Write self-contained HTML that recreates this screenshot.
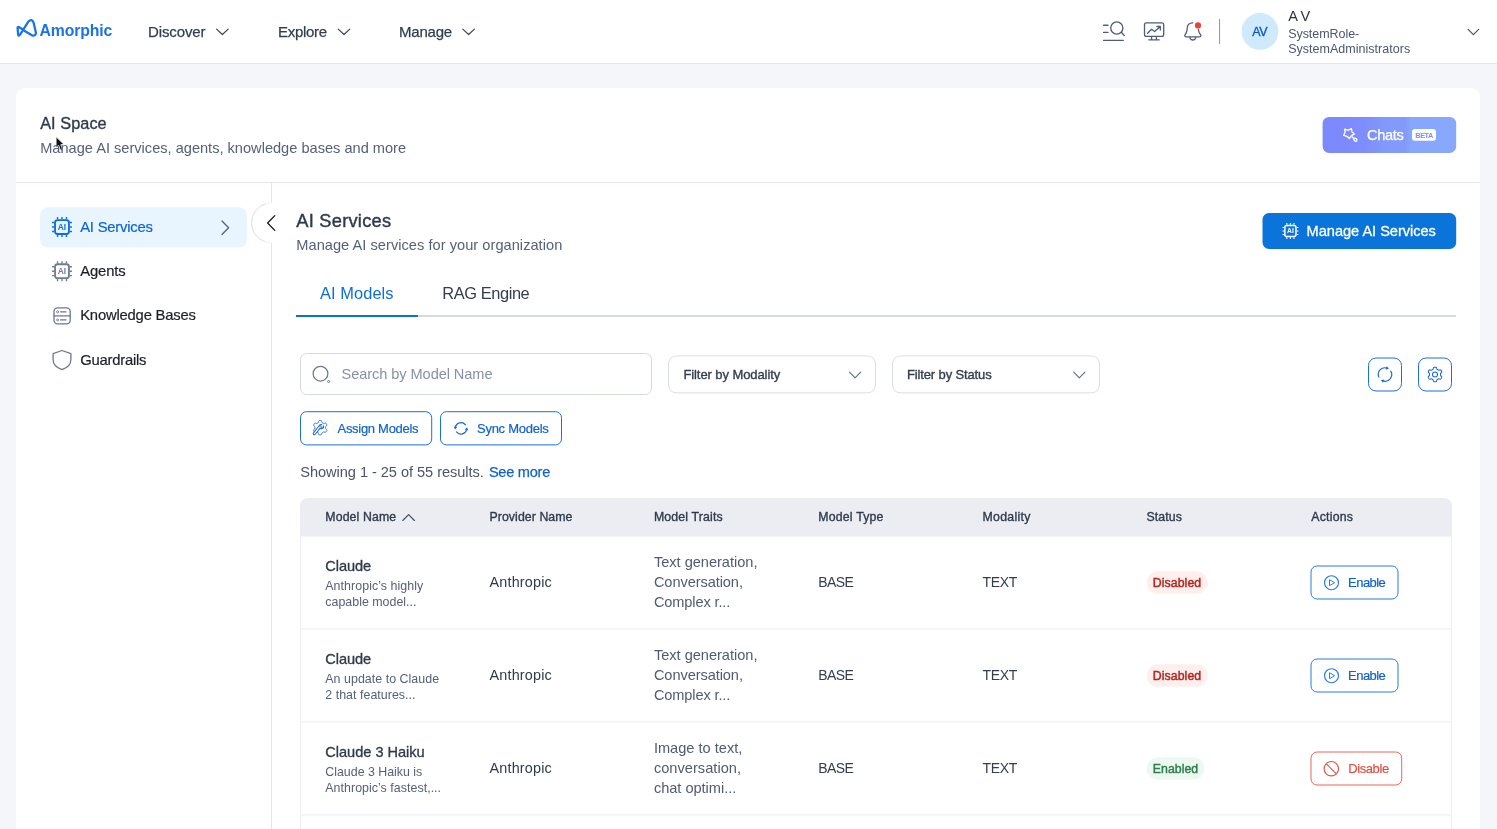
<!DOCTYPE html>
<html lang="en">
<head>
<meta charset="utf-8">
<title>Amorphic - AI Space</title>
<style>
*{box-sizing:border-box;margin:0;padding:0}
html,body{width:1497px;height:829px;overflow:hidden;background:#f4f6fa;font-family:"Liberation Sans",Arial,sans-serif;color:#2f3747}
body{position:relative}
header{position:absolute;left:0;top:0;width:1497px;height:64px;background:#fff;border-bottom:1px solid #e3e6ef}
main{position:absolute;left:16px;top:88px;width:1464px;height:760px;background:#fff;border-radius:9px 9px 0 0}
svg.ov{position:absolute;left:0;top:0;width:1497px;height:829px;overflow:hidden}
.t{position:absolute;white-space:nowrap;line-height:1;display:block}
#texts,svg.ov{will-change:transform}
</style>
</head>
<body>
<header></header>
<main></main>
<svg class="ov" width="1497" height="829" viewBox="0 0 1497 829">
<path d="M24.6 31.2 L32.2 35.6 Q35.9 37.2 36.4 33 L33.9 22.3 Q32.2 17.6 28.4 21.2 L19.7 35 Q17.9 37.4 17.6 34.4 L17.1 28 Q17 26.3 18.8 27.2 L22.6 29.6" fill="none" stroke="#1a73e8" stroke-width="2.4" stroke-linecap="round" stroke-linejoin="round" transform="translate(27 27.9) scale(0.95) translate(-27 -27.9)"/>
<path d="M216.6 29.1 L222.4 34.5 L228.2 29.1" fill="none" stroke="#3f4a5f" stroke-width="1.25" stroke-linecap="round" stroke-linejoin="round"/>
<path d="M338.2 29.1 L344.0 34.5 L349.8 29.1" fill="none" stroke="#3f4a5f" stroke-width="1.25" stroke-linecap="round" stroke-linejoin="round"/>
<path d="M462.8 29.1 L468.6 34.5 L474.4 29.1" fill="none" stroke="#3f4a5f" stroke-width="1.25" stroke-linecap="round" stroke-linejoin="round"/>
<g fill="none" stroke="#515c75" stroke-width="1.35" stroke-linecap="round"><path d="M1103.6 25.2H1108 M1103.6 32.4H1108 M1103.6 40.4H1123.3"/><circle cx="1116.8" cy="28" r="6.1"/><path d="M1121.5 32.6L1124.3 35.4"/></g>
<g fill="none" stroke="#515c75" stroke-width="1.3" stroke-linecap="round" stroke-linejoin="round"><rect x="1144.5" y="22.8" width="19.2" height="13.6" rx="2"/><path d="M1151.6 36.6V39.6 M1156.4 36.6V39.6 M1148.8 39.8H1159.2"/><path d="M1147.6 33.2L1151.5 29.3L1154.6 31.5L1160 26.8 M1156.9 26.5H1160.3V30"/></g>
<g fill="none" stroke="#515c75" stroke-width="1.3" stroke-linecap="round" stroke-linejoin="round"><path d="M1192.8 22.8C1189 22.8 1187.2 25.6 1187.2 28.8C1187.2 32.2 1185.8 33.6 1185 34.8C1184.4 35.8 1185 36.9 1186.2 36.9H1199.4C1200.6 36.9 1201.2 35.8 1200.6 34.8C1199.8 33.6 1198.6 32.2 1198.4 29.5"/><path d="M1189.8 37.6C1190.3 39.2 1191.4 40 1192.8 40C1194.2 40 1195.3 39.2 1195.8 37.6"/></g>
<circle cx="1198" cy="25.4" r="3.1" fill="#e5453a"/>
<path d="M1219.6 19V44" stroke="#8b95ab" stroke-width="1"/>
<circle cx="1260" cy="31.4" r="18.4" fill="#cfe9fd"/>
<path d="M1468.1 29.4 L1473.4 34.6 L1478.7 29.4" fill="none" stroke="#4a5670" stroke-width="1.25" stroke-linecap="round" stroke-linejoin="round"/>
<path d="M16 182.5H1480" stroke="#e3e6ef" stroke-width="1"/>
<path d="M271.5 183V829" stroke="#e3e6ef" stroke-width="1"/>
<linearGradient id="cg" x1="0" x2="1" y1="0" y2="0"><stop offset="0" stop-color="#7c88fd"/><stop offset="0.3" stop-color="#7e8cfc"/><stop offset="0.45" stop-color="#8099fb"/><stop offset="0.62" stop-color="#829bfb"/><stop offset="0.66" stop-color="#87a6fd"/><stop offset="1" stop-color="#88a8fd"/></linearGradient>
<rect x="1322.6" y="116.9" width="133.6" height="36" rx="6.5" fill="url(#cg)"/>
<g fill="none" stroke="#fff" stroke-width="1.3" stroke-linejoin="round" stroke-linecap="round"><path d="M1344.7 129.1L1348 130.3L1351.4 128.6L1352 131.9L1354.4 133.9L1351.3 135.9L1349.3 138.5L1346.9 136.3L1343.6 135.4L1345.1 132.3Z"/><path d="M1352.2 137L1354 138.5"/><ellipse cx="1355.4" cy="139.8" rx="1.7" ry="1.3" transform="rotate(40 1355.4 139.8)"/></g>
<rect x="1412" y="129" width="24" height="11.8" rx="3" fill="#fff"/>
<rect x="40" y="207.3" width="207" height="40.2" rx="8" fill="#e8f5fe"/>
<g fill="none" stroke="#0d6fd8" stroke-linecap="butt">
<rect x="55.05" y="220.05" width="13.90" height="13.90" rx="2.50" stroke-width="1.85"/>
<path d="M57.55 217.05V219.30 M57.55 234.70V236.95 M52.05 222.55H54.30 M69.70 222.55H71.95 M62.00 217.05V219.30 M62.00 234.70V236.95 M52.05 227.00H54.30 M69.70 227.00H71.95 M66.45 217.05V219.30 M66.45 234.70V236.95 M52.05 231.45H54.30 M69.70 231.45H71.95 " stroke-width="1.40"/>
</g>
<text x="62.00" y="230.01" text-anchor="middle" font-family="Liberation Sans, Arial, sans-serif" font-weight="bold" font-size="8.40" fill="#0d6fd8">AI</text>
<g fill="none" stroke="#707c96" stroke-linecap="butt">
<rect x="55.05" y="264.25" width="13.90" height="13.90" rx="2.50" stroke-width="1.85"/>
<path d="M57.55 261.25V263.50 M57.55 278.90V281.15 M52.05 266.75H54.30 M69.70 266.75H71.95 M62.00 261.25V263.50 M62.00 278.90V281.15 M52.05 271.20H54.30 M69.70 271.20H71.95 M66.45 261.25V263.50 M66.45 278.90V281.15 M52.05 275.65H54.30 M69.70 275.65H71.95 " stroke-width="1.40"/>
</g>
<text x="62.00" y="274.21" text-anchor="middle" font-family="Liberation Sans, Arial, sans-serif" font-weight="bold" font-size="8.40" fill="#707c96">AI</text>
<path d="M222.0 220.9 L228.6 227.7 L222.0 234.5" fill="none" stroke="#5a6782" stroke-width="1.4" stroke-linecap="round" stroke-linejoin="round"/>
<g fill="none" stroke="#6b7894" stroke-width="1.3" stroke-linecap="round"><rect x="54" y="307.8" width="16.2" height="16" rx="3.6"/><path d="M54 315.8H70.2 M60.6 311.8H66 M60.6 319.9H66"/></g><circle cx="57.6" cy="311.8" r="1" fill="none" stroke="#6b7894" stroke-width="0.9"/><circle cx="57.6" cy="319.9" r="1" fill="none" stroke="#6b7894" stroke-width="0.9"/>
<path d="M62 350.5L70.9 353.7V359.5C70.9 364.4 67.2 367.9 62 369.7C56.8 367.9 53.1 364.4 53.1 359.5V353.7Z" fill="none" stroke="#6b7894" stroke-width="1.3" stroke-linejoin="round"/>
<path d="M271.5 202.8A20 20 0 0 0 271.5 242.8Z" fill="#fff" stroke="none"/>
<path d="M269.76 202.88A20 20 0 0 0 269.76 242.72" fill="none" stroke="#eef0f5" stroke-width="1"/>
<path d="M265.32 203.78A20 20 0 0 0 265.32 241.82" fill="none" stroke="#dfe2ec" stroke-width="1"/>
<rect x="270" y="203.4" width="4" height="38.8" fill="#fff"/>
<path d="M274.8 215.6 L267.6 223.0 L274.8 230.4" fill="none" stroke="#14171d" stroke-width="1.3" stroke-linecap="round" stroke-linejoin="round"/>
<rect x="1262.5" y="213" width="193.7" height="35.9" rx="6.5" fill="#0b74da"/>
<g fill="none" stroke="#ffffff" stroke-linecap="butt">
<rect x="1284.84" y="225.44" width="11.12" height="11.12" rx="2.00" stroke-width="1.48"/>
<path d="M1286.84 223.04V224.84 M1286.84 237.16V238.96 M1282.44 227.44H1284.24 M1296.56 227.44H1298.36 M1290.40 223.04V224.84 M1290.40 237.16V238.96 M1282.44 231.00H1284.24 M1296.56 231.00H1298.36 M1293.96 223.04V224.84 M1293.96 237.16V238.96 M1282.44 234.56H1284.24 M1296.56 234.56H1298.36 " stroke-width="1.12"/>
</g>
<text x="1290.40" y="233.41" text-anchor="middle" font-family="Liberation Sans, Arial, sans-serif" font-weight="bold" font-size="6.72" fill="#ffffff">AI</text>
<path d="M296 316H1456" stroke="#d5d9e3" stroke-width="2"/><path d="M296 316H418" stroke="#0d6fd8" stroke-width="2"/>
<rect x="300.5" y="353.5" width="351" height="41" rx="6" fill="#fff" stroke="#d5d9e4"/>
<circle cx="320.5" cy="373.7" r="7.4" fill="none" stroke="#6c7790" stroke-width="1.2"/><circle cx="328.6" cy="381.5" r="1" fill="none" stroke="#626e88" stroke-width="0.9"/>
<rect x="668.5" y="355.9" width="207" height="37" rx="8" fill="#fff" stroke="#d9dde8"/>
<rect x="892.5" y="355.9" width="207" height="37" rx="8" fill="#fff" stroke="#d9dde8"/>
<path d="M849.5 372.2 L855.1 377.8 L860.7 372.2" fill="none" stroke="#66718b" stroke-width="1.2" stroke-linecap="round" stroke-linejoin="round"/>
<path d="M1073.7 372.2 L1079.3 377.8 L1084.9 372.2" fill="none" stroke="#66718b" stroke-width="1.2" stroke-linecap="round" stroke-linejoin="round"/>
<rect x="1368.5" y="358" width="33" height="33" rx="7.5" fill="#fff" stroke="#1a6fdc"/>
<rect x="1418.5" y="358" width="33" height="33" rx="7.5" fill="#fff" stroke="#1a6fdc"/>
<path d="M1378.83 377.12 A6.7 6.7 0 0 1 1387.07 368.13" fill="none" stroke="#1a66d2" stroke-width="1.15" stroke-linecap="round"/>
<path d="M1386.82 366.47 L1388.64 368.64 L1385.89 369.32 Z" fill="#1a66d2" stroke="#1a66d2" stroke-width="0.3" stroke-linejoin="round"/>
<path d="M1390.80 371.15 A6.7 6.7 0 0 1 1382.71 380.80" fill="none" stroke="#1a66d2" stroke-width="1.15" stroke-linecap="round"/>
<path d="M1382.90 382.46 L1381.16 380.23 L1383.93 379.64 Z" fill="#1a66d2" stroke="#1a66d2" stroke-width="0.3" stroke-linejoin="round"/>
<path d="M1440.50 374.50 L1440.50 374.69 L1440.50 374.88 L1440.50 375.08 L1440.52 375.28 L1440.58 375.48 L1440.73 375.72 L1441.01 376.00 L1441.35 376.32 L1441.61 376.65 L1441.71 376.94 L1441.70 377.21 L1441.64 377.46 L1441.55 377.70 L1441.44 377.93 L1441.32 378.15 L1441.19 378.37 L1441.04 378.58 L1440.88 378.77 L1440.70 378.95 L1440.47 379.09 L1440.16 379.15 L1439.75 379.09 L1439.30 378.95 L1438.92 378.85 L1438.64 378.84 L1438.43 378.89 L1438.25 378.97 L1438.08 379.07 L1437.92 379.17 L1437.75 379.26 L1437.58 379.36 L1437.42 379.45 L1437.25 379.55 L1437.09 379.66 L1436.94 379.82 L1436.81 380.07 L1436.71 380.45 L1436.60 380.91 L1436.44 381.29 L1436.24 381.53 L1436.01 381.66 L1435.76 381.73 L1435.51 381.77 L1435.25 381.79 L1435.00 381.80 L1434.75 381.79 L1434.49 381.77 L1434.24 381.73 L1433.99 381.66 L1433.76 381.53 L1433.56 381.29 L1433.40 380.91 L1433.29 380.45 L1433.19 380.07 L1433.06 379.82 L1432.91 379.66 L1432.75 379.55 L1432.58 379.45 L1432.42 379.36 L1432.25 379.26 L1432.08 379.17 L1431.92 379.07 L1431.75 378.97 L1431.57 378.89 L1431.36 378.84 L1431.08 378.85 L1430.70 378.95 L1430.25 379.09 L1429.84 379.15 L1429.53 379.09 L1429.30 378.95 L1429.12 378.77 L1428.96 378.58 L1428.81 378.37 L1428.68 378.15 L1428.56 377.93 L1428.45 377.70 L1428.36 377.46 L1428.30 377.21 L1428.29 376.94 L1428.39 376.65 L1428.65 376.32 L1428.99 376.00 L1429.27 375.72 L1429.42 375.48 L1429.48 375.28 L1429.50 375.08 L1429.50 374.88 L1429.50 374.69 L1429.50 374.50 L1429.50 374.31 L1429.50 374.12 L1429.50 373.92 L1429.48 373.72 L1429.42 373.52 L1429.27 373.28 L1428.99 373.00 L1428.65 372.68 L1428.39 372.35 L1428.29 372.06 L1428.30 371.79 L1428.36 371.54 L1428.45 371.30 L1428.56 371.07 L1428.68 370.85 L1428.81 370.63 L1428.96 370.42 L1429.12 370.23 L1429.30 370.05 L1429.53 369.91 L1429.84 369.85 L1430.25 369.91 L1430.70 370.05 L1431.08 370.15 L1431.36 370.16 L1431.57 370.11 L1431.75 370.03 L1431.92 369.93 L1432.08 369.83 L1432.25 369.74 L1432.42 369.64 L1432.58 369.55 L1432.75 369.45 L1432.91 369.34 L1433.06 369.18 L1433.19 368.93 L1433.29 368.55 L1433.40 368.09 L1433.56 367.71 L1433.76 367.47 L1433.99 367.34 L1434.24 367.27 L1434.49 367.23 L1434.75 367.21 L1435.00 367.20 L1435.25 367.21 L1435.51 367.23 L1435.76 367.27 L1436.01 367.34 L1436.24 367.47 L1436.44 367.71 L1436.60 368.09 L1436.71 368.55 L1436.81 368.93 L1436.94 369.18 L1437.09 369.34 L1437.25 369.45 L1437.42 369.55 L1437.58 369.64 L1437.75 369.74 L1437.92 369.83 L1438.08 369.93 L1438.25 370.03 L1438.43 370.11 L1438.64 370.16 L1438.92 370.15 L1439.30 370.05 L1439.75 369.91 L1440.16 369.85 L1440.47 369.91 L1440.70 370.05 L1440.88 370.23 L1441.04 370.42 L1441.19 370.63 L1441.32 370.85 L1441.44 371.07 L1441.55 371.30 L1441.64 371.54 L1441.70 371.79 L1441.71 372.06 L1441.61 372.35 L1441.35 372.68 L1441.01 373.00 L1440.73 373.28 L1440.58 373.52 L1440.52 373.72 L1440.50 373.92 L1440.50 374.12 L1440.50 374.31 Z" fill="none" stroke="#1a66d2" stroke-width="1.05" stroke-linejoin="round"/><circle cx="1435" cy="374.5" r="2.5" fill="none" stroke="#1a66d2" stroke-width="1.05"/>
<rect x="300.5" y="411.7" width="131.2" height="33.2" rx="6" fill="#fff" stroke="#1a6fdc"/>
<rect x="440.5" y="411.7" width="121" height="33.2" rx="6" fill="#fff" stroke="#1a6fdc"/>
<path d="M325.50 427.70 L325.50 427.89 L325.50 428.07 L325.50 428.26 L325.52 428.45 L325.59 428.65 L325.75 428.88 L326.05 429.16 L326.42 429.48 L326.69 429.81 L326.81 430.10 L326.81 430.37 L326.75 430.62 L326.66 430.85 L326.56 431.08 L326.44 431.30 L326.30 431.51 L326.16 431.72 L326.00 431.91 L325.82 432.09 L325.58 432.22 L325.27 432.27 L324.85 432.19 L324.39 432.04 L324.00 431.92 L323.72 431.89 L323.51 431.93 L323.33 432.01 L323.17 432.10 L323.01 432.20 L322.85 432.29 L322.69 432.38 L322.53 432.47 L322.37 432.57 L322.21 432.68 L322.07 432.84 L321.95 433.10 L321.86 433.50 L321.77 433.98 L321.62 434.38 L321.42 434.62 L321.19 434.76 L320.95 434.83 L320.70 434.87 L320.45 434.89 L320.20 434.90 L319.95 434.89 L319.70 434.87 L319.45 434.83 L319.21 434.76 L318.98 434.62 L318.78 434.38 L318.63 433.98 L318.54 433.50 L318.45 433.10 L318.33 432.84 L318.19 432.68 L318.03 432.57 L317.87 432.47 L317.71 432.38 L317.55 432.29 L317.39 432.20 L317.23 432.10 L317.07 432.01 L316.89 431.93 L316.68 431.89 L316.40 431.92 L316.01 432.04 L315.55 432.19 L315.13 432.27 L314.82 432.22 L314.58 432.09 L314.40 431.91 L314.24 431.72 L314.10 431.51 L313.96 431.30 L313.84 431.08 L313.74 430.85 L313.65 430.62 L313.59 430.37 L313.59 430.10 L313.71 429.81 L313.98 429.48 L314.35 429.16 L314.65 428.88 L314.81 428.65 L314.88 428.45 L314.90 428.26 L314.90 428.07 L314.90 427.89 L314.90 427.70 L314.90 427.51 L314.90 427.33 L314.90 427.14 L314.88 426.95 L314.81 426.75 L314.65 426.52 L314.35 426.24 L313.98 425.92 L313.71 425.59 L313.59 425.30 L313.59 425.03 L313.65 424.78 L313.74 424.55 L313.84 424.32 L313.96 424.10 L314.10 423.89 L314.24 423.68 L314.40 423.49 L314.58 423.31 L314.82 423.18 L315.13 423.13 L315.55 423.21 L316.01 423.36 L316.40 423.48 L316.68 423.51 L316.89 423.47 L317.07 423.39 L317.23 423.30 L317.39 423.20 L317.55 423.11 L317.71 423.02 L317.87 422.93 L318.03 422.83 L318.19 422.72 L318.33 422.56 L318.45 422.30 L318.54 421.90 L318.63 421.42 L318.78 421.02 L318.98 420.78 L319.21 420.64 L319.45 420.57 L319.70 420.53 L319.95 420.51 L320.20 420.50 L320.45 420.51 L320.70 420.53 L320.95 420.57 L321.19 420.64 L321.42 420.78 L321.62 421.02 L321.77 421.42 L321.86 421.90 L321.95 422.30 L322.07 422.56 L322.21 422.72 L322.37 422.83 L322.53 422.93 L322.69 423.02 L322.85 423.11 L323.01 423.20 L323.17 423.30 L323.33 423.39 L323.51 423.47 L323.72 423.51 L324.00 423.48 L324.39 423.36 L324.85 423.21 L325.27 423.13 L325.58 423.18 L325.82 423.31 L326.00 423.49 L326.16 423.68 L326.30 423.89 L326.44 424.10 L326.56 424.32 L326.66 424.55 L326.75 424.78 L326.81 425.03 L326.81 425.30 L326.69 425.59 L326.42 425.92 L326.05 426.24 L325.75 426.52 L325.59 426.75 L325.52 426.95 L325.50 427.14 L325.50 427.33 L325.50 427.51 Z" fill="none" stroke="#1a66d2" stroke-width="0.95" stroke-linejoin="round"/>
<path d="M314.4 433.6L319.4 427.2" stroke="#1a66d2" stroke-width="3.3" stroke-linecap="round"/><circle cx="321.4" cy="426.6" r="2.7" fill="#1a66d2"/><path d="M314.4 433.6L319.4 427.2" stroke="#fff" stroke-width="1.3" stroke-linecap="round"/><circle cx="321.4" cy="426.6" r="1.6" fill="#fff"/><path d="M321.4 426.6L323.6 424.2" stroke="#fff" stroke-width="1.5"/><path d="M320.9 425.2V427.2H322.8" fill="none" stroke="#1a66d2" stroke-width="0.9"/>
<path d="M465.49 424.89 A5.7 5.7 0 0 0 455.36 427.61" fill="none" stroke="#1a66d2" stroke-width="1.2" stroke-linecap="round"/>
<path d="M453.97 426.66 L455.13 429.24 L456.95 427.07 Z" fill="#1a66d2" stroke="#1a66d2" stroke-width="0.3" stroke-linejoin="round"/>
<path d="M456.51 431.91 A5.7 5.7 0 0 0 466.64 429.19" fill="none" stroke="#1a66d2" stroke-width="1.2" stroke-linecap="round"/>
<path d="M468.03 430.14 L466.87 427.56 L465.05 429.73 Z" fill="#1a66d2" stroke="#1a66d2" stroke-width="0.3" stroke-linejoin="round"/>
<path d="M300 536.4V506A8 8 0 0 1 308 498H1444A8 8 0 0 1 1452 506V536.4Z" fill="#ebedf2"/>
<path d="M300.5 536.4V829 M1451.5 536.4V829" stroke="#eceef3" stroke-width="1"/>
<path d="M300 628.9H1452 M300 721.9H1452 M300 814.9H1452" stroke="#eef0f4" stroke-width="1.4"/>
<path d="M402.8 520.5 L408.6 514.7 L414.4 520.5" fill="none" stroke="#3f4a5f" stroke-width="1.15" stroke-linecap="round" stroke-linejoin="round"/>
<path d="M56 136.6V147.9L58.6 145.5L60.6 150.6L62.8 149.7L60.8 144.8L64.2 144.6Z" fill="#111" stroke="#fff" stroke-width="1" stroke-linejoin="round"/>
<rect x="1146.8" y="571.3" width="60.4" height="22.4" rx="11.2" fill="#fdefee"/>
<rect x="1311" y="566.0" width="87" height="33" rx="6" fill="#fff" stroke="#2b7de0" stroke-width="1"/>
<circle cx="1331.5" cy="582.7" r="7" fill="none" stroke="#2b7de0" stroke-width="1.15"/>
<path d="M1329.5 579.7 L1334.6 582.7 L1329.5 585.7 Z" fill="none" stroke="#2b7de0" stroke-width="1" stroke-linejoin="round"/>
<rect x="1146.8" y="664.3" width="60.4" height="22.4" rx="11.2" fill="#fdefee"/>
<rect x="1311" y="659.0" width="87" height="33" rx="6" fill="#fff" stroke="#2b7de0" stroke-width="1"/>
<circle cx="1331.5" cy="675.7" r="7" fill="none" stroke="#2b7de0" stroke-width="1.15"/>
<path d="M1329.5 672.7 L1334.6 675.7 L1329.5 678.7 Z" fill="none" stroke="#2b7de0" stroke-width="1" stroke-linejoin="round"/>
<rect x="1146.8" y="757.3" width="57.5" height="22.4" rx="11.2" fill="#edf8f1"/>
<rect x="1311" y="752.0" width="90.7" height="33" rx="6" fill="#fff" stroke="#e9675c" stroke-width="1"/>
<circle cx="1331.3" cy="768.7" r="7.2" fill="none" stroke="#e25347" stroke-width="1.15"/>
<path d="M1326.2 763.6 L1336.4 773.8" fill="none" stroke="#e25347" stroke-width="1.1"/>
</svg>
<div id="texts">
<span class="t" style="left:39.6px;top:22px;line-height:17px;font-size:15.8px;color:#1a73e8;font-weight:bold;letter-spacing:-0.142px;">Amorphic</span>
<span class="t" style="left:148.0px;top:23px;line-height:17px;font-size:15px;color:#333d4f;letter-spacing:-0.120px;-webkit-text-stroke:0.25px #333d4f;">Discover</span>
<span class="t" style="left:278.0px;top:23px;line-height:17px;font-size:15px;color:#333d4f;letter-spacing:-0.308px;-webkit-text-stroke:0.25px #333d4f;">Explore</span>
<span class="t" style="left:399.0px;top:23px;line-height:17px;font-size:15px;color:#333d4f;letter-spacing:-0.220px;-webkit-text-stroke:0.25px #333d4f;">Manage</span>
<span class="t" style="left:1252.2px;top:25px;line-height:14px;font-size:12.5px;color:#0b57c9;letter-spacing:-0.225px;-webkit-text-stroke:0.3px #0b57c9;">AV</span>
<span class="t" style="left:1288.2px;top:8px;line-height:16px;font-size:14.5px;color:#2a3140;letter-spacing:-0.259px;">A V</span>
<span class="t" style="left:1288.2px;top:27px;line-height:14px;font-size:12.5px;color:#4b5670;letter-spacing:-0.050px;">SystemRole-</span>
<span class="t" style="left:1288.2px;top:42px;line-height:14px;font-size:12.5px;color:#4b5670;letter-spacing:0.022px;">SystemAdministrators</span>
<span class="t" style="left:40.2px;top:114px;line-height:18px;font-size:16.3px;color:#2f3a4c;letter-spacing:0.053px;-webkit-text-stroke:0.35px #2f3a4c;">AI Space</span>
<span class="t" style="left:40.2px;top:140px;line-height:16px;font-size:14.6px;color:#556079;">Manage AI services, agents, knowledge bases and more</span>
<span class="t" style="left:1367.0px;top:127px;line-height:16px;font-size:14.6px;color:#ffffff;letter-spacing:-0.325px;-webkit-text-stroke:0.25px #ffffff;">Chats</span>
<span class="t" style="left:1415.3px;top:131px;line-height:9px;font-size:7.4px;color:#7f8ffb;font-weight:bold;letter-spacing:-0.495px;">BETA</span>
<span class="t" style="left:80.2px;top:219px;line-height:16px;font-size:14.8px;color:#0b64d0;letter-spacing:-0.204px;-webkit-text-stroke:0.2px #0b64d0;">AI Services</span>
<span class="t" style="left:80.2px;top:263px;line-height:16px;font-size:14.8px;color:#1b1f27;letter-spacing:-0.130px;-webkit-text-stroke:0.2px #1b1f27;">Agents</span>
<span class="t" style="left:80.2px;top:307px;line-height:16px;font-size:14.8px;color:#1b1f27;letter-spacing:-0.191px;-webkit-text-stroke:0.2px #1b1f27;">Knowledge Bases</span>
<span class="t" style="left:80.2px;top:352px;line-height:16px;font-size:14.8px;color:#1b1f27;letter-spacing:-0.227px;-webkit-text-stroke:0.2px #1b1f27;">Guardrails</span>
<span class="t" style="left:296.3px;top:210px;line-height:21px;font-size:18.3px;color:#2f3a4c;letter-spacing:0.232px;-webkit-text-stroke:0.4px #2f3a4c;">AI Services</span>
<span class="t" style="left:296.3px;top:237px;line-height:16px;font-size:14.6px;color:#556079;letter-spacing:0.039px;">Manage AI services for your organization</span>
<span class="t" style="left:1306.6px;top:223px;line-height:16px;font-size:14.6px;color:#ffffff;letter-spacing:-0.028px;-webkit-text-stroke:0.3px #ffffff;">Manage AI Services</span>
<span class="t" style="left:320.1px;top:284px;line-height:18px;font-size:16.4px;color:#0d6fd8;letter-spacing:0.068px;">AI Models</span>
<span class="t" style="left:442.3px;top:284px;line-height:18px;font-size:16.4px;color:#333d4f;letter-spacing:-0.411px;">RAG Engine</span>
<span class="t" style="left:341.5px;top:366px;line-height:16px;font-size:14.6px;color:#8790a5;letter-spacing:-0.075px;">Search by Model Name</span>
<span class="t" style="left:683.4px;top:367px;line-height:15px;font-size:13px;color:#333d4f;letter-spacing:-0.081px;-webkit-text-stroke:0.35px #333d4f;">Filter by Modality</span>
<span class="t" style="left:907.0px;top:367px;line-height:15px;font-size:13px;color:#333d4f;letter-spacing:-0.138px;-webkit-text-stroke:0.35px #333d4f;">Filter by Status</span>
<span class="t" style="left:337.5px;top:421px;line-height:15px;font-size:13px;color:#0f62cf;letter-spacing:-0.288px;-webkit-text-stroke:0.2px #0f62cf;">Assign Models</span>
<span class="t" style="left:477.0px;top:421px;line-height:15px;font-size:13px;color:#0f62cf;letter-spacing:-0.266px;-webkit-text-stroke:0.2px #0f62cf;">Sync Models</span>
<span class="t" style="left:300.3px;top:464px;line-height:16px;font-size:14.6px;color:#4a5468;letter-spacing:-0.051px;">Showing 1 - 25 of 55 results.</span>
<span class="t" style="left:488.9px;top:464px;line-height:16px;font-size:14.6px;color:#0f62cf;letter-spacing:-0.273px;-webkit-text-stroke:0.25px #0f62cf;">See more</span>
<span class="t" style="left:325.3px;top:510px;line-height:14px;font-size:12.3px;color:#2f3a4c;letter-spacing:0.128px;-webkit-text-stroke:0.35px #2f3a4c;">Model Name</span>
<span class="t" style="left:489.5px;top:510px;line-height:14px;font-size:12.3px;color:#2f3a4c;letter-spacing:0.076px;-webkit-text-stroke:0.35px #2f3a4c;">Provider Name</span>
<span class="t" style="left:653.9px;top:510px;line-height:14px;font-size:12.3px;color:#2f3a4c;letter-spacing:0.168px;-webkit-text-stroke:0.35px #2f3a4c;">Model Traits</span>
<span class="t" style="left:818.2px;top:510px;line-height:14px;font-size:12.3px;color:#2f3a4c;letter-spacing:0.214px;-webkit-text-stroke:0.35px #2f3a4c;">Model Type</span>
<span class="t" style="left:982.6px;top:510px;line-height:14px;font-size:12.3px;color:#2f3a4c;letter-spacing:0.275px;-webkit-text-stroke:0.35px #2f3a4c;">Modality</span>
<span class="t" style="left:1146.4px;top:510px;line-height:14px;font-size:12.3px;color:#2f3a4c;letter-spacing:0.138px;-webkit-text-stroke:0.35px #2f3a4c;">Status</span>
<span class="t" style="left:1311.2px;top:510px;line-height:14px;font-size:12.3px;color:#2f3a4c;letter-spacing:0.239px;-webkit-text-stroke:0.35px #2f3a4c;">Actions</span>
<span class="t" style="left:325.3px;top:558px;line-height:16px;font-size:14.6px;color:#2f3a4c;letter-spacing:-0.092px;-webkit-text-stroke:0.32px #2f3a4c;">Claude</span>
<span class="t" style="left:325.3px;top:579px;line-height:14px;font-size:12.4px;color:#556079;letter-spacing:0.062px;">Anthropic’s highly</span>
<span class="t" style="left:325.3px;top:595px;line-height:14px;font-size:12.4px;color:#556079;letter-spacing:0.017px;">capable model...</span>
<span class="t" style="left:489.5px;top:574px;line-height:16px;font-size:14.4px;color:#2f3a4c;letter-spacing:0.189px;">Anthropic</span>
<span class="t" style="left:653.9px;top:554px;line-height:16px;font-size:14.6px;color:#505b73;letter-spacing:-0.016px;">Text generation,</span>
<span class="t" style="left:653.9px;top:574px;line-height:16px;font-size:14.6px;color:#505b73;letter-spacing:-0.081px;">Conversation,</span>
<span class="t" style="left:653.9px;top:594px;line-height:16px;font-size:14.6px;color:#505b73;letter-spacing:-0.130px;">Complex r...</span>
<span class="t" style="left:818.2px;top:574px;line-height:16px;font-size:14px;color:#333d4f;letter-spacing:-0.590px;">BASE</span>
<span class="t" style="left:982.6px;top:574px;line-height:16px;font-size:14px;color:#333d4f;letter-spacing:-0.395px;">TEXT</span>
<span class="t" style="left:1152.7px;top:576px;line-height:14px;font-size:12.3px;color:#b3261e;letter-spacing:0.093px;-webkit-text-stroke:0.45px #b3261e;">Disabled</span>
<span class="t" style="left:1348.1px;top:575px;line-height:15px;font-size:13px;color:#0f62cf;letter-spacing:-0.547px;-webkit-text-stroke:0.2px #0f62cf;">Enable</span>
<span class="t" style="left:325.3px;top:651px;line-height:16px;font-size:14.6px;color:#2f3a4c;letter-spacing:-0.092px;-webkit-text-stroke:0.32px #2f3a4c;">Claude</span>
<span class="t" style="left:325.3px;top:672px;line-height:14px;font-size:12.4px;color:#556079;letter-spacing:0.043px;">An update to Claude</span>
<span class="t" style="left:325.3px;top:688px;line-height:14px;font-size:12.4px;color:#556079;letter-spacing:0.036px;">2 that features...</span>
<span class="t" style="left:489.5px;top:667px;line-height:16px;font-size:14.4px;color:#2f3a4c;letter-spacing:0.189px;">Anthropic</span>
<span class="t" style="left:653.9px;top:647px;line-height:16px;font-size:14.6px;color:#505b73;letter-spacing:-0.016px;">Text generation,</span>
<span class="t" style="left:653.9px;top:667px;line-height:16px;font-size:14.6px;color:#505b73;letter-spacing:-0.081px;">Conversation,</span>
<span class="t" style="left:653.9px;top:687px;line-height:16px;font-size:14.6px;color:#505b73;letter-spacing:-0.130px;">Complex r...</span>
<span class="t" style="left:818.2px;top:667px;line-height:16px;font-size:14px;color:#333d4f;letter-spacing:-0.590px;">BASE</span>
<span class="t" style="left:982.6px;top:667px;line-height:16px;font-size:14px;color:#333d4f;letter-spacing:-0.395px;">TEXT</span>
<span class="t" style="left:1152.7px;top:669px;line-height:14px;font-size:12.3px;color:#b3261e;letter-spacing:0.093px;-webkit-text-stroke:0.45px #b3261e;">Disabled</span>
<span class="t" style="left:1348.1px;top:668px;line-height:15px;font-size:13px;color:#0f62cf;letter-spacing:-0.547px;-webkit-text-stroke:0.2px #0f62cf;">Enable</span>
<span class="t" style="left:325.3px;top:744px;line-height:16px;font-size:14.6px;color:#2f3a4c;letter-spacing:-0.028px;-webkit-text-stroke:0.32px #2f3a4c;">Claude 3 Haiku</span>
<span class="t" style="left:325.3px;top:765px;line-height:14px;font-size:12.4px;color:#556079;letter-spacing:-0.007px;">Claude 3 Haiku is</span>
<span class="t" style="left:325.3px;top:781px;line-height:14px;font-size:12.4px;color:#556079;letter-spacing:0.044px;">Anthropic’s fastest,...</span>
<span class="t" style="left:489.5px;top:760px;line-height:16px;font-size:14.4px;color:#2f3a4c;letter-spacing:0.189px;">Anthropic</span>
<span class="t" style="left:653.9px;top:740px;line-height:16px;font-size:14.6px;color:#505b73;">Image to text,</span>
<span class="t" style="left:653.9px;top:760px;line-height:16px;font-size:14.6px;color:#505b73;letter-spacing:0.030px;">conversation,</span>
<span class="t" style="left:653.9px;top:780px;line-height:16px;font-size:14.6px;color:#505b73;letter-spacing:-0.024px;">chat optimi...</span>
<span class="t" style="left:818.2px;top:760px;line-height:16px;font-size:14px;color:#333d4f;letter-spacing:-0.590px;">BASE</span>
<span class="t" style="left:982.6px;top:760px;line-height:16px;font-size:14px;color:#333d4f;letter-spacing:-0.395px;">TEXT</span>
<span class="t" style="left:1152.8px;top:762px;line-height:14px;font-size:12.3px;color:#2e7d4f;letter-spacing:0.037px;-webkit-text-stroke:0.45px #2e7d4f;">Enabled</span>
<span class="t" style="left:1348.2px;top:761px;line-height:15px;font-size:13px;color:#e04f44;letter-spacing:-0.394px;-webkit-text-stroke:0.2px #e04f44;">Disable</span>
</div>
</body>
</html>
